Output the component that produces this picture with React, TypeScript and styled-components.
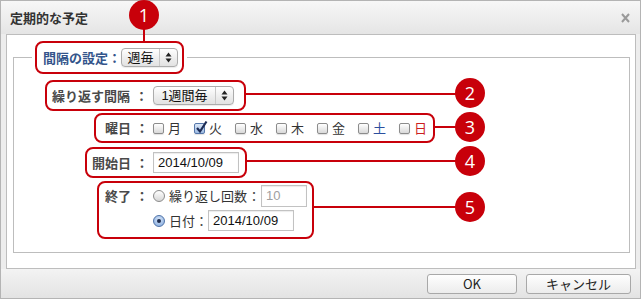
import styled, { createGlobalStyle } from 'styled-components'

const JP = `"Noto Sans CJK JP", sans-serif`
const LATIN = `"Liberation Sans", "Noto Sans CJK JP", sans-serif`
const RED = '#c8000a'

const GlobalStyle = createGlobalStyle`
  html, body { margin: 0; padding: 0; background: #fff; }
  body { font-family: ${JP}; }
`

const Dialog = styled.div`
  position: relative;
  width: 641px;
  height: 299px;
  box-sizing: border-box;
  border: 1px solid #b4b4b4;
  background: #ededed;
  display: flex;
  flex-direction: column;
`

const TitleBar = styled.div`
  flex: 0 0 33px;
  display: flex;
  align-items: center;
  justify-content: space-between;
  padding: 0 10px 0 9px;
  background: linear-gradient(#f7f7f7, #e5e5e5);
  font: bold 13px/1 ${JP};
  color: #333;
`

const Panel = styled.div`
  flex: 0 0 235px;
  box-sizing: border-box;
  margin: 0 4px 0 5px;
  border: 1px solid #bdbdbd;
  background: #fff;
  padding: 6px 5px 0 6px;
`

const Group = styled.fieldset`
  margin: 0;
  padding: 6px 0 0 0;
  min-width: 0;
  height: 212px;
  box-sizing: border-box;
  border: 1px solid #bdbdbd;
`

const Legend = styled.legend`
  margin-left: 18px;
  padding: 0 3px;
`

const Marked = styled.div<{ $h: number; $pl: number; $pr: number; $ml?: number; $align?: string }>`
  display: flex;
  align-items: ${({ $align }) => $align || 'center'};
  box-sizing: border-box;
  height: ${({ $h }) => $h}px;
  margin-left: ${({ $ml }) => $ml || 0}px;
  padding: 0 ${({ $pr }) => $pr}px 0 ${({ $pl }) => $pl}px;
  border: 2px solid ${RED};
  border-radius: 8px;
`

const Row = styled.div<{ $mt: number }>`
  display: flex;
  margin-top: ${({ $mt }) => $mt}px;
`

const GroupTitle = styled.span`
  font: bold 13px/19px ${JP};
  color: #34558b;
  white-space: nowrap;
`

const Label = styled.span`
  font: bold 13px/20px ${JP};
  color: #4a4a4a;
  white-space: nowrap;
`

const Colon = styled.span<{ $w: number; $blue?: boolean; $bold?: boolean }>`
  flex: 0 0 ${({ $w }) => $w}px;
  text-align: center;
  font: ${({ $bold }) => ($bold ? 'bold' : 'normal')} 13px/20px ${JP};
  color: ${({ $blue }) => ($blue ? '#34558b' : '#4a4a4a')};
`

const SelectBox = styled.div<{ $w: number }>`
  display: flex;
  flex: 0 0 ${({ $w }) => $w}px;
  height: 19px;
  box-sizing: border-box;
  border: 1px solid #acacac;
  border-radius: 4px;
  background: linear-gradient(#ffffff, #ececec 60%, #e2e2e2);
  box-shadow: 0 1px 1px rgba(0, 0, 0, 0.08);
`

const SelectText = styled.span`
  flex: 1;
  text-align: center;
  font: 13px/17px ${LATIN};
  color: #111;
`

const SelectArrow = styled.span`
  flex: 0 0 17px;
  display: flex;
  align-items: center;
  justify-content: center;
  border-left: 1px solid #c8c8c8;
`

const Days = styled.div`
  display: flex;
  gap: 13px;
`

const Day = styled.label`
  display: flex;
  align-items: center;
  gap: 4px;
`

const DayName = styled.span<{ $color: string }>`
  font: 13px/20px ${JP};
  color: ${({ $color }) => $color};
`

const CheckBox = styled.span<{ $on?: boolean }>`
  position: relative;
  width: 11px;
  height: 11px;
  box-sizing: border-box;
  border: 1px solid ${({ $on }) => ($on ? '#5577aa' : '#8c8c8c')};
  border-radius: 2px;
  background: ${({ $on }) =>
    $on ? 'linear-gradient(#dbe7f7, #9dbbe3)' : 'linear-gradient(#ffffff, #d9d9d9)'};
  box-shadow: 0 1px 1px rgba(0, 0, 0, 0.12);
`

const CheckMark = styled.svg`
  position: absolute;
  left: 0px;
  top: -4px;
`

const TextInput = styled.div<{ $w: number; $h: number; $muted?: boolean }>`
  flex: 0 0 ${({ $w }) => $w}px;
  height: ${({ $h }) => $h}px;
  box-sizing: border-box;
  border: 1px solid #c2c2c2;
  box-shadow: inset 0 1px 1px rgba(0, 0, 0, 0.08);
  background: #fff;
  padding-left: 4px;
  font: 13px/${({ $h }) => $h - 2}px ${LATIN};
  color: ${({ $muted }) => ($muted ? '#a0a0a0' : '#111')};
`

const EndLines = styled.div`
  display: flex;
  flex-direction: column;
  gap: 3px;
  padding-top: 2px;
`

const EndLine = styled.div<{ $h: number }>`
  display: flex;
  align-items: center;
  height: ${({ $h }) => $h}px;
`

const Radio = styled.span<{ $on?: boolean }>`
  display: flex;
  align-items: center;
  justify-content: center;
  width: 12px;
  height: 12px;
  margin-right: 4px;
  box-sizing: border-box;
  border-radius: 50%;
  border: 1px solid ${({ $on }) => ($on ? '#4f73a8' : '#8c8c8c')};
  background: ${({ $on }) =>
    $on ? 'radial-gradient(circle at 50% 35%, #d6e5f8, #7fa6dc)' : 'linear-gradient(#ffffff, #d6d6d6)'};
  &::after {
    content: '';
    display: ${({ $on }) => ($on ? 'block' : 'none')};
    width: 4px;
    height: 4px;
    border-radius: 50%;
    background: #1c2b4d;
  }
`

const OptionText = styled.span`
  font: 13px/20px ${JP};
  color: #333;
  white-space: nowrap;
`

const Footer = styled.div`
  flex: 1;
  display: flex;
  justify-content: flex-end;
  align-items: flex-start;
  gap: 9px;
  padding: 5px 9px 0 0;
  background: linear-gradient(#f3f3f3, #e3e3e3);
`

const Button = styled.button<{ $w: number }>`
  width: ${({ $w }) => $w}px;
  height: 20px;
  box-sizing: border-box;
  padding: 0;
  border: 1px solid #a8a8a8;
  border-radius: 3px;
  background: linear-gradient(#fefefe, #ececec);
  font: 13px/18px ${JP};
  color: #222;
`

const Callout = styled.div<{ $x: number; $y: number }>`
  position: absolute;
  left: ${({ $x }) => $x - 16}px;
  top: ${({ $y }) => $y - 16}px;
  width: 30px;
  height: 30px;
  border-radius: 50%;
  background: ${RED};
  color: #fff;
  font: 18px/30px "Open Sans", "Noto Sans", sans-serif;
  text-align: center;
`

const Leader = styled.div<{ $x: number; $y: number; $w: number; $h: number }>`
  position: absolute;
  left: ${({ $x }) => $x - 1}px;
  top: ${({ $y }) => $y - 1}px;
  width: ${({ $w }) => $w}px;
  height: ${({ $h }) => $h}px;
  background: ${RED};
`

const Arrows = () => (
  <svg width="7" height="11" viewBox="0 0 7 11">
    <path d="M0.5 4.5 L3.5 0.5 L6.5 4.5 Z M0.5 6.5 L3.5 10.5 L6.5 6.5 Z" fill="#222" />
  </svg>
)

const Select = ({ w, value }: { w: number; value: string }) => (
  <SelectBox $w={w}>
    <SelectText>{value}</SelectText>
    <SelectArrow>
      <Arrows />
    </SelectArrow>
  </SelectBox>
)

const days = [
  { name: '月', color: '#333' },
  { name: '火', color: '#333', on: true },
  { name: '水', color: '#333' },
  { name: '木', color: '#333' },
  { name: '金', color: '#333' },
  { name: '土', color: '#2b4f9e' },
  { name: '日', color: '#cc1f1f' },
]

const leaders = [
  { x: 143, y: 28, w: 2, h: 13 },
  { x: 246, y: 93, w: 210, h: 2 },
  { x: 434, y: 126, w: 22, h: 2 },
  { x: 246, y: 160, w: 210, h: 2 },
  { x: 312, y: 206, w: 144, h: 2 },
]

const callouts = [
  { n: 1, x: 144, y: 15 },
  { n: 2, x: 470, y: 93 },
  { n: 3, x: 470, y: 127 },
  { n: 4, x: 470, y: 161 },
  { n: 5, x: 470, y: 207 },
]

export default function App() {
  return (
    <>
      <GlobalStyle />
      <Dialog>
        <TitleBar>
          <span>定期的な予定</span>
          <svg width="9" height="10" viewBox="0 0 9 10">
            <path d="M1 1 L8 9 M8 1 L1 9" stroke="#9a9a9a" strokeWidth="2" />
          </svg>
        </TitleBar>

        <Panel>
          <Group>
            <Legend>
              <Marked $h={33} $pl={6} $pr={4}>
                <GroupTitle>間隔の設定</GroupTitle>
                <Colon $w={11} $blue $bold>：</Colon>
                <Select w={57} value="週毎" />
              </Marked>
            </Legend>

            <Row $mt={0}>
              <Marked $h={31} $ml={31} $pl={5} $pr={10}>
                <Label>繰り返す間隔</Label>
                <Colon $w={23} $bold>：</Colon>
                <Select w={81} value="1週間毎" />
              </Marked>
            </Row>

            <Row $mt={2}>
              <Marked $h={30} $ml={80} $pl={9} $pr={6}>
                <Label>曜日</Label>
                <Colon $w={22} $bold>：</Colon>
                <Days>
                  {days.map((d) => (
                    <Day key={d.name}>
                      <CheckBox $on={d.on}>
                        {d.on && (
                          <CheckMark width="13" height="14" viewBox="0 0 13 14">
                            <path d="M2 8 L5 11.5 L11.5 1.5" stroke="#1d2c55" strokeWidth="2.2" fill="none" />
                          </CheckMark>
                        )}
                      </CheckBox>
                      <DayName $color={d.color}>{d.name}</DayName>
                    </Day>
                  ))}
                </Days>
              </Marked>
            </Row>

            <Row $mt={4}>
              <Marked $h={31} $ml={71} $pl={5} $pr={6}>
                <Label>開始日</Label>
                <Colon $w={22} $bold>：</Colon>
                <TextInput $w={86} $h={21}>2014/10/09</TextInput>
              </Marked>
            </Row>

            <Row $mt={3}>
              <Marked $h={58} $ml={83} $pl={6} $pr={5} $align="flex-start">
                <EndLines>
                  <EndLine $h={22}>
                    <Label>終了</Label>
                    <Colon $w={22} $bold>：</Colon>
                  </EndLine>
                </EndLines>
                <EndLines>
                  <EndLine $h={22}>
                    <Radio />
                    <OptionText>繰り返し回数</OptionText>
                    <Colon $w={14}>：</Colon>
                    <TextInput $w={46} $h={22} $muted>10</TextInput>
                  </EndLine>
                  <EndLine $h={21}>
                    <Radio $on />
                    <OptionText>日付</OptionText>
                    <Colon $w={13}>：</Colon>
                    <TextInput $w={86} $h={21}>2014/10/09</TextInput>
                  </EndLine>
                </EndLines>
              </Marked>
            </Row>
          </Group>
        </Panel>

        <Footer>
          <Button $w={90}>OK</Button>
          <Button $w={105}>キャンセル</Button>
        </Footer>

        {leaders.map((l, i) => (
          <Leader key={i} $x={l.x} $y={l.y} $w={l.w} $h={l.h} />
        ))}
        {callouts.map((c) => (
          <Callout key={c.n} $x={c.x} $y={c.y}>
            {c.n}
          </Callout>
        ))}
      </Dialog>
    </>
  )
}
